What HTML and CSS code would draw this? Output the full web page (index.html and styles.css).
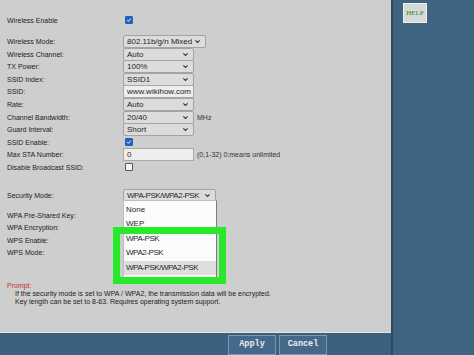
FILE: index.html
```html
<!DOCTYPE html>
<html lang="en">
<head>
  <meta charset="UTF-8">
  <title>Wireless Settings</title>
  <link rel="stylesheet" href="styles.css">
</head>
<body>
  <div class="frame">
    <div class="main">
      <div class="panel">
        <div class="row enable">
          <span>Wireless Enable</span>
          <span class="check on"><svg viewBox="0 0 8 8"><path d="M1.6 4.2 L3.3 5.8 L6.4 2.2" /></svg></span>
        </div>

        <div class="group">
          <div class="row">
            <span>Wireless Mode:</span>
            <div class="select w-mode"><span>802.11b/g/n Mixed</span><svg viewBox="0 0 8 5"><path d="M1.5 1.3 L4 3.6 L6.5 1.3" /></svg></div>
          </div>
          <div class="row">
            <span>Wireless Channel:</span>
            <div class="select"><span>Auto</span><svg viewBox="0 0 8 5"><path d="M1.5 1.3 L4 3.6 L6.5 1.3" /></svg></div>
          </div>
          <div class="row">
            <span>TX Power:</span>
            <div class="select"><span>100%</span><svg viewBox="0 0 8 5"><path d="M1.5 1.3 L4 3.6 L6.5 1.3" /></svg></div>
          </div>
          <div class="row">
            <span>SSID Index:</span>
            <div class="select"><span>SSID1</span><svg viewBox="0 0 8 5"><path d="M1.5 1.3 L4 3.6 L6.5 1.3" /></svg></div>
          </div>
          <div class="row">
            <span>SSID:</span>
            <div class="input">www.wikihow.com</div>
          </div>
          <div class="row">
            <span>Rate:</span>
            <div class="select"><span>Auto</span><svg viewBox="0 0 8 5"><path d="M1.5 1.3 L4 3.6 L6.5 1.3" /></svg></div>
          </div>
          <div class="row">
            <span>Channel Bandwidth:</span>
            <div class="field">
              <div class="select"><span>20/40</span><svg viewBox="0 0 8 5"><path d="M1.5 1.3 L4 3.6 L6.5 1.3" /></svg></div>
              <span class="note">MHz</span>
            </div>
          </div>
          <div class="row">
            <span>Guard Interval:</span>
            <div class="select"><span>Short</span><svg viewBox="0 0 8 5"><path d="M1.5 1.3 L4 3.6 L6.5 1.3" /></svg></div>
          </div>
          <div class="row">
            <span>SSID Enable:</span>
            <span class="check on"><svg viewBox="0 0 8 8"><path d="M1.6 4.2 L3.3 5.8 L6.4 2.2" /></svg></span>
          </div>
          <div class="row">
            <span>Max STA Number:</span>
            <div class="field">
              <div class="input">0</div>
              <span class="note">(0,1-32) 0:means unlimited</span>
            </div>
          </div>
          <div class="row">
            <span>Disable Broadcast SSID:</span>
            <span class="check"></span>
          </div>
        </div>

        <div class="row security">
          <span>Security Mode:</span>
          <div class="select w-sec"><span class="narrow">WPA-PSK/WPA2-PSK</span><svg viewBox="0 0 8 5"><path d="M1.5 1.3 L4 3.6 L6.5 1.3" /></svg></div>
        </div>

        <div class="group wpa">
          <div class="row"><span>WPA Pre-Shared Key:</span></div>
          <div class="row"><span>WPA Encryption:</span></div>
          <div class="row"><span>WPS Enable:</span></div>
          <div class="row"><span>WPS Mode:</span></div>
        </div>

        <div class="prompt">
          <p class="prompt-title">Prompt:</p>
          <p>If the security mode is set to WPA / WPA2, the transmission data will be encrypted.</p>
          <p>Key length can be set to 8-63. Requires operating system support.</p>
        </div>

        <ul class="dropdown">
          <li>None</li>
          <li>WEP</li>
          <li class="narrow">WPA-PSK</li>
          <li class="narrow">WPA2-PSK</li>
          <li class="narrow active">WPA-PSK/WPA2-PSK</li>
        </ul>
        <div class="highlight"></div>
      </div>

      <div class="actions">
        <button class="btn">Apply</button>
        <button class="btn">Cancel</button>
      </div>
    </div>

    <aside class="side">
      <div class="help">HELP</div>
    </aside>
  </div>
</body>
</html>
```

FILE: styles.css
```css
html,
body {
  margin: 0;
  padding: 0;
}

body {
  width: 474px;
  height: 355px;
  overflow: hidden;
  font-family: "Liberation Sans", Arial, sans-serif;
  font-size: 7px;
  color: #222;
  background: #3f6481;
}

.frame {
  display: flex;
  height: 355px;
}

.main {
  width: 391px;
  display: flex;
  flex-direction: column;
}

.panel {
  position: relative;
  height: 337px;
  box-sizing: border-box;
  padding: 14px 0 0 7px;
  background: #cecece;
  border-bottom: 1px solid #e4e4e4;
}

.row {
  display: grid;
  grid-template-columns: 116px auto;
  align-items: center;
  height: 12.6px;
  white-space: nowrap;
}

.group {
  margin-top: 8.4px;
}

.security {
  margin-top: 15.4px;
}

.wpa {
  margin-top: 7.4px;
}

.field {
  display: flex;
  align-items: center;
  gap: 3px;
}

.note {
  font-size: 7px;
  color: #333;
}

.select {
  box-sizing: border-box;
  width: 71px;
  height: 13px;
  display: flex;
  align-items: center;
  justify-content: space-between;
  padding: 0 4px 0 3px;
  background: #dcdcdc;
  border: 1px solid #a3a3a3;
  border-radius: 2px;
  font-size: 8px;
  color: #1e1e1e;
}

.select svg {
  flex: none;
  width: 7px;
  height: 5px;
  fill: none;
  stroke: #333;
  stroke-width: 1.2;
}

.narrow {
  letter-spacing: -0.45px;
}

.w-mode {
  width: 83px;
}

.w-sec {
  width: 93px;
}

.input {
  box-sizing: border-box;
  width: 71px;
  height: 13px;
  display: flex;
  align-items: center;
  padding: 0 3px;
  background: #eeeeee;
  border: 1px solid #a8a8a8;
  font-size: 8px;
  color: #1e1e1e;
}

.check {
  box-sizing: border-box;
  width: 8px;
  height: 8px;
  margin-left: 2px;
  display: flex;
  background: #f4f4f4;
  border: 1px solid #555;
  border-radius: 1px;
}

.check.on {
  background: #2360c4;
  border-color: #2360c4;
}

.check svg {
  width: 100%;
  height: 100%;
  fill: none;
  stroke: #fff;
  stroke-width: 1.3;
}

.prompt {
  margin-top: 23px;
  line-height: 8px;
}

.prompt p {
  margin: 0;
  padding-left: 8px;
}

.prompt .prompt-title {
  padding-left: 0;
  color: #d0272b;
}

.dropdown {
  position: absolute;
  left: 123px;
  top: 200px;
  width: 94px;
  height: 78px;
  box-sizing: border-box;
  margin: 0;
  padding: 2px 0 0;
  list-style: none;
  background: #fbfbfb;
  border: 1px solid #bdbdbd;
  border-right-color: #7c7c7c;
  font-size: 8px;
  color: #1e1e1e;
  white-space: nowrap;
}

.dropdown li {
  height: 14.4px;
  line-height: 14.4px;
  padding-left: 2px;
}

.dropdown li.active {
  background: #dedede;
}

.highlight {
  position: absolute;
  left: 113px;
  top: 227px;
  width: 113px;
  height: 57px;
  box-sizing: border-box;
  border: 7px solid #27e829;
}

.actions {
  flex: 1;
  display: flex;
  gap: 3px;
  padding: 2px 0 0 228px;
  background: #3a617f;
}

.btn {
  width: 48px;
  height: 20px;
  margin: 0;
  padding: 0 0 3px;
  background: #44698a;
  border: 1px solid #7a98ae;
  color: #ececec;
  font-family: "Liberation Mono", "Courier New", monospace;
  font-weight: bold;
  font-size: 8.5px;
}

.side {
  flex: 1;
  border-left: 2px solid #2c4b62;
  background: #3f6481;
  padding: 3px 0 0 10px;
}

.help {
  width: 24px;
  height: 20px;
  box-sizing: border-box;
  display: flex;
  align-items: center;
  justify-content: center;
  background: #d6dad6;
  border: 1px solid #eef0ee;
  color: #3c7f1e;
  font-family: "Liberation Serif", "Times New Roman", serif;
  font-size: 7px;
}
```
